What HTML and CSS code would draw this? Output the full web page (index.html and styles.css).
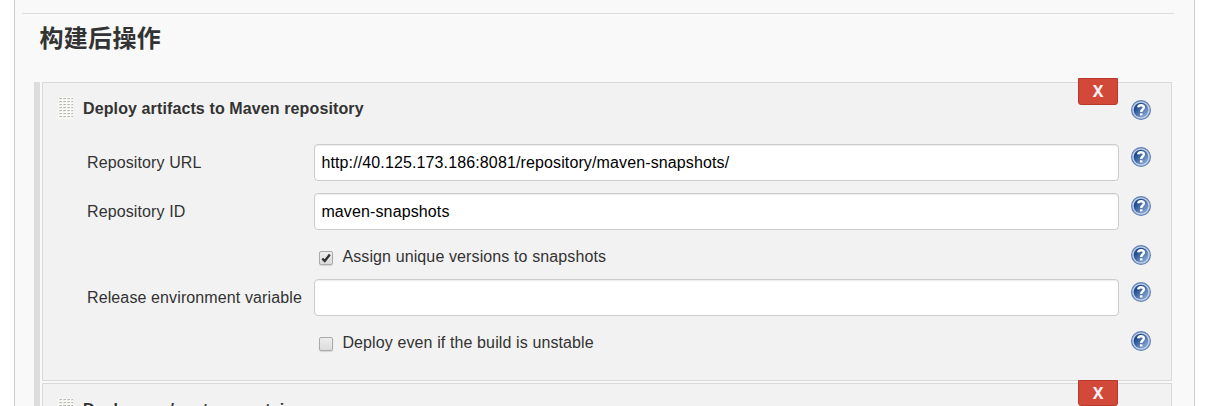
FILE: index.html
```
<!DOCTYPE html>
<html lang="zh-CN">
<head>
<meta charset="utf-8">
<title>构建后操作</title>
<link rel="stylesheet" href="styles.css">
</head>
<body>
<svg class="defs" width="0" height="0" aria-hidden="true">
  <defs>
    <linearGradient id="disc" x1="0" y1="0" x2="1" y2="1">
      <stop offset="0.25" stop-color="#1f4a8c"/>
      <stop offset="1" stop-color="#9dbbe2"/>
    </linearGradient>
    <pattern id="dots" width="4" height="3" patternUnits="userSpaceOnUse">
      <rect width="4" height="3" fill="#fafaf8"/>
      <rect x="1" y="1" width="3" height="1" fill="#d0d0cb"/>
      <rect x="2" y="1" width="2" height="1" fill="#b9b9b3"/>
      <rect x="1" y="2" width="2" height="1" fill="#eeeeeb"/>
    </pattern>
    <symbol id="help" viewBox="0 0 20 20">
      <circle cx="10" cy="10" r="9.4" fill="#bccde5" stroke="#5e80b3" stroke-width="1.2"/>
      <circle cx="10" cy="10" r="7.3" fill="url(#disc)"/>
      <path d="M7.2 7.4C7.3 4.6 12.9 4.4 12.9 7.3C12.9 9.3 10.2 9.2 10.2 12" fill="none" stroke="#fff" stroke-width="2.4"/>
      <rect x="8.9" y="13.2" width="2.6" height="2.4" rx=".6" fill="#fff"/>
    </symbol>
    <symbol id="grip" viewBox="0 0 15 22"><rect width="15" height="22" fill="url(#dots)"/></symbol>
  </defs>
</svg>
<main class="panel">
  <hr class="rule">
  <h2 class="heading">构建后操作</h2>
  <div class="steps">
    <section class="card">
      <button class="delete">X</button>
      <header class="card-head">
        <svg class="grip"><use href="#grip"/></svg>
        <h3 class="title">Deploy artifacts to Maven repository</h3>
        <svg class="help"><use href="#help"/></svg>
      </header>
      <div class="row">
        <label class="label" for="url">Repository URL</label>
        <input class="field" id="url" type="text" value="http://40.125.173.186:8081/repository/maven-snapshots/">
        <svg class="help"><use href="#help"/></svg>
      </div>
      <div class="row">
        <label class="label" for="rid">Repository ID</label>
        <input class="field" id="rid" type="text" value="maven-snapshots">
        <svg class="help"><use href="#help"/></svg>
      </div>
      <div class="row row-check">
        <label class="check"><span class="box"><svg class="tick" viewBox="0 0 12 12"><path d="M2.3 6.6L4.8 9L9.8 2.6" fill="none" stroke="#333" stroke-width="2.4"/></svg></span><span>Assign unique versions to snapshots</span></label>
        <svg class="help"><use href="#help"/></svg>
      </div>
      <div class="row">
        <label class="label" for="env">Release environment variable</label>
        <input class="field" id="env" type="text">
        <svg class="help"><use href="#help"/></svg>
      </div>
      <div class="row row-check">
        <label class="check"><span class="box"></span><span>Deploy even if the build is unstable</span></label>
        <svg class="help"><use href="#help"/></svg>
      </div>
    </section>
    <section class="card">
      <button class="delete delete-next">X</button>
      <header class="card-head">
        <svg class="grip"><use href="#grip"/></svg>
        <h3 class="title">Deploy war/ear to a container</h3>
      </header>
    </section>
  </div>
</main>
</body>
</html>
```
FILE: styles.css
```
* { box-sizing: border-box; }
body {
  margin: 0;
  height: 406px;
  overflow: hidden;
  background: #fff;
  color: #333;
  font: 16px/20px "Liberation Sans", Arial, "Noto Sans CJK SC", sans-serif;
  letter-spacing: 0.115px;
}
.defs { position: absolute; }
.panel {
  width: 1181px;
  height: 406px;
  margin-left: 14px;
  padding: 13px 20px 0 7px;
  overflow: hidden;
  background: #f9f9f9;
  border: solid #ccc;
  border-width: 0 1px;
}
.rule { height: 1px; margin: 0; border: 0; background: #ddd; }
.heading {
  margin: 6px 0 0 17.5px;
  font: bold 24px/34px "Noto Sans CJK SC", sans-serif;
  letter-spacing: 0.3px;
}
.steps {
  display: flex;
  flex-direction: column;
  gap: 2px;
  width: 1138px;
  height: 400px;
  margin: 28px 0 0 12px;
  padding-left: 2px;
  border-left: 6px solid #ddd;
}
.card {
  position: relative;
  flex: none;
  width: 1130px;
  height: 299px;
  padding: 16px 20px 0 15px;
  background: #f2f2f2;
  border: 1px solid #d9d9d9;
}
.delete {
  position: absolute;
  top: -5px;
  right: 53px;
  width: 40px;
  height: 27px;
  padding: 0;
  background: #d24939;
  border: 1px solid #b93a2c;
  border-radius: 0 0 3px 3px;
  color: #f6f0f2;
  font: bold 16px/25px "Noto Sans", sans-serif;
}
.delete-next { top: -4px; height: 26px; }
.card-head { display: flex; height: 45px; }
.grip { width: 15px; height: 22px; margin-top: -2px; }
.title { flex: 1; margin: 1px 0 0 10px; font-size: 16px; line-height: 18px; }
.help { width: 20px; height: 20px; margin-top: 3px; }
.card-head .help { margin-top: 1px; }
.row {
  display: grid;
  grid-template-columns: 227px 805px 20px;
  height: 49px;
  padding-left: 29px;
}
.row .help { margin-left: 12px; }
.row-check { height: 37px; }
.label { line-height: 37px; white-space: nowrap; }
.field {
  width: 805px;
  height: 37px;
  padding: 0 6.4px;
  background: #fff;
  border: 1px solid #ccc;
  border-radius: 4px;
  box-shadow: inset 0 1px 1px rgba(0, 0, 0, .075);
  color: #000;
  font: inherit;
  letter-spacing: 0.125px;
}
.check {
  grid-column: 2;
  display: flex;
  align-items: flex-start;
  gap: 9.4px;
  padding: 5px 0 0 5px;
  white-space: nowrap;
}
.box {
  width: 14px;
  height: 14px;
  margin-top: 4px;
  border: 1px solid #aaa;
  border-radius: 2px;
  background: linear-gradient(#ededed, #dcdcdc);
  box-shadow: 0 1px 1px rgba(0, 0, 0, .12);
}
.tick { display: block; width: 12px; height: 12px; }
```
